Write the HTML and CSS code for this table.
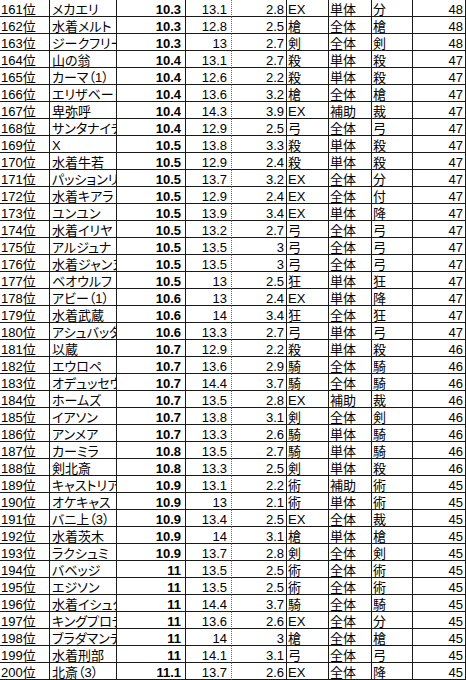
FILE: index.html
```html
<!DOCTYPE html>
<html lang="ja">
<head>
<meta charset="utf-8">
<link rel="stylesheet" href="styles.css">
</head>
<body>
<div class="sheet">
<div class="row"><span class="c rk">161位</span><span class="c nm">メカエリ</span><span class="c v b">10.3</span><span class="c v d">13.1</span><span class="c v">2.8</span><span class="c t">EX</span><span class="c t">単体</span><span class="c t">分</span><span class="c v">48</span></div>
<div class="row"><span class="c rk">162位</span><span class="c nm">水着メルト</span><span class="c v b">10.3</span><span class="c v d">12.8</span><span class="c v">2.5</span><span class="c t">槍</span><span class="c t">全体</span><span class="c t">槍</span><span class="c v">48</span></div>
<div class="row"><span class="c rk">163位</span><span class="c nm">ジークフリート</span><span class="c v b">10.3</span><span class="c v d">13</span><span class="c v">2.7</span><span class="c t">剣</span><span class="c t">全体</span><span class="c t">剣</span><span class="c v">48</span></div>
<div class="row"><span class="c rk">164位</span><span class="c nm">山の翁</span><span class="c v b">10.4</span><span class="c v d">13.1</span><span class="c v">2.7</span><span class="c t">殺</span><span class="c t">単体</span><span class="c t">殺</span><span class="c v">47</span></div>
<div class="row"><span class="c rk">165位</span><span class="c nm">カーマ（1）</span><span class="c v b">10.4</span><span class="c v d">12.6</span><span class="c v">2.2</span><span class="c t">殺</span><span class="c t">単体</span><span class="c t">殺</span><span class="c v">47</span></div>
<div class="row"><span class="c rk">166位</span><span class="c nm">エリザベート</span><span class="c v b">10.4</span><span class="c v d">13.6</span><span class="c v">3.2</span><span class="c t">槍</span><span class="c t">全体</span><span class="c t">槍</span><span class="c v">47</span></div>
<div class="row"><span class="c rk">167位</span><span class="c nm">卑弥呼</span><span class="c v b">10.4</span><span class="c v d">14.3</span><span class="c v">3.9</span><span class="c t">EX</span><span class="c t">補助</span><span class="c t">裁</span><span class="c v">47</span></div>
<div class="row"><span class="c rk">168位</span><span class="c nm">サンタナイチンゲール</span><span class="c v b">10.4</span><span class="c v d">12.9</span><span class="c v">2.5</span><span class="c t">弓</span><span class="c t">全体</span><span class="c t">弓</span><span class="c v">47</span></div>
<div class="row"><span class="c rk">169位</span><span class="c nm">X</span><span class="c v b">10.5</span><span class="c v d">13.8</span><span class="c v">3.3</span><span class="c t">殺</span><span class="c t">単体</span><span class="c t">殺</span><span class="c v">47</span></div>
<div class="row"><span class="c rk">170位</span><span class="c nm">水着牛若</span><span class="c v b">10.5</span><span class="c v d">12.9</span><span class="c v">2.4</span><span class="c t">殺</span><span class="c t">単体</span><span class="c t">殺</span><span class="c v">47</span></div>
<div class="row"><span class="c rk">171位</span><span class="c nm">パッションリップ</span><span class="c v b">10.5</span><span class="c v d">13.7</span><span class="c v">3.2</span><span class="c t">EX</span><span class="c t">全体</span><span class="c t">分</span><span class="c v">47</span></div>
<div class="row"><span class="c rk">172位</span><span class="c nm">水着キアラ</span><span class="c v b">10.5</span><span class="c v d">12.9</span><span class="c v">2.4</span><span class="c t">EX</span><span class="c t">全体</span><span class="c t">付</span><span class="c v">47</span></div>
<div class="row"><span class="c rk">173位</span><span class="c nm">ユンユン</span><span class="c v b">10.5</span><span class="c v d">13.9</span><span class="c v">3.4</span><span class="c t">EX</span><span class="c t">単体</span><span class="c t">降</span><span class="c v">47</span></div>
<div class="row"><span class="c rk">174位</span><span class="c nm">水着イリヤ</span><span class="c v b">10.5</span><span class="c v d">13.2</span><span class="c v">2.7</span><span class="c t">弓</span><span class="c t">全体</span><span class="c t">弓</span><span class="c v">47</span></div>
<div class="row"><span class="c rk">175位</span><span class="c nm">アルジュナ</span><span class="c v b">10.5</span><span class="c v d">13.5</span><span class="c v">3</span><span class="c t">弓</span><span class="c t">全体</span><span class="c t">弓</span><span class="c v">47</span></div>
<div class="row"><span class="c rk">176位</span><span class="c nm">水着ジャンヌ</span><span class="c v b">10.5</span><span class="c v d">13.5</span><span class="c v">3</span><span class="c t">弓</span><span class="c t">全体</span><span class="c t">弓</span><span class="c v">47</span></div>
<div class="row"><span class="c rk">177位</span><span class="c nm">ベオウルフ</span><span class="c v b">10.5</span><span class="c v d">13</span><span class="c v">2.5</span><span class="c t">狂</span><span class="c t">単体</span><span class="c t">狂</span><span class="c v">47</span></div>
<div class="row"><span class="c rk">178位</span><span class="c nm">アビー（1）</span><span class="c v b">10.6</span><span class="c v d">13</span><span class="c v">2.4</span><span class="c t">EX</span><span class="c t">単体</span><span class="c t">降</span><span class="c v">47</span></div>
<div class="row"><span class="c rk">179位</span><span class="c nm">水着武蔵</span><span class="c v b">10.6</span><span class="c v d">14</span><span class="c v">3.4</span><span class="c t">狂</span><span class="c t">全体</span><span class="c t">狂</span><span class="c v">47</span></div>
<div class="row"><span class="c rk">180位</span><span class="c nm">アシュバッターマン</span><span class="c v b">10.6</span><span class="c v d">13.3</span><span class="c v">2.7</span><span class="c t">弓</span><span class="c t">単体</span><span class="c t">弓</span><span class="c v">47</span></div>
<div class="row"><span class="c rk">181位</span><span class="c nm">以蔵</span><span class="c v b">10.7</span><span class="c v d">12.9</span><span class="c v">2.2</span><span class="c t">殺</span><span class="c t">単体</span><span class="c t">殺</span><span class="c v">46</span></div>
<div class="row"><span class="c rk">182位</span><span class="c nm">エウロペ</span><span class="c v b">10.7</span><span class="c v d">13.6</span><span class="c v">2.9</span><span class="c t">騎</span><span class="c t">全体</span><span class="c t">騎</span><span class="c v">46</span></div>
<div class="row"><span class="c rk">183位</span><span class="c nm">オデュッセウス</span><span class="c v b">10.7</span><span class="c v d">14.4</span><span class="c v">3.7</span><span class="c t">騎</span><span class="c t">全体</span><span class="c t">騎</span><span class="c v">46</span></div>
<div class="row"><span class="c rk">184位</span><span class="c nm">ホームズ</span><span class="c v b">10.7</span><span class="c v d">13.5</span><span class="c v">2.8</span><span class="c t">EX</span><span class="c t">補助</span><span class="c t">裁</span><span class="c v">46</span></div>
<div class="row"><span class="c rk">185位</span><span class="c nm">イアソン</span><span class="c v b">10.7</span><span class="c v d">13.8</span><span class="c v">3.1</span><span class="c t">剣</span><span class="c t">全体</span><span class="c t">剣</span><span class="c v">46</span></div>
<div class="row"><span class="c rk">186位</span><span class="c nm">アンメア</span><span class="c v b">10.7</span><span class="c v d">13.3</span><span class="c v">2.6</span><span class="c t">騎</span><span class="c t">単体</span><span class="c t">騎</span><span class="c v">46</span></div>
<div class="row"><span class="c rk">187位</span><span class="c nm">カーミラ</span><span class="c v b">10.8</span><span class="c v d">13.5</span><span class="c v">2.7</span><span class="c t">騎</span><span class="c t">単体</span><span class="c t">騎</span><span class="c v">46</span></div>
<div class="row"><span class="c rk">188位</span><span class="c nm">剣北斎</span><span class="c v b">10.8</span><span class="c v d">13.3</span><span class="c v">2.5</span><span class="c t">剣</span><span class="c t">単体</span><span class="c t">殺</span><span class="c v">46</span></div>
<div class="row"><span class="c rk">189位</span><span class="c nm">キャストリア</span><span class="c v b">10.9</span><span class="c v d">13.1</span><span class="c v">2.2</span><span class="c t">術</span><span class="c t">補助</span><span class="c t">術</span><span class="c v">45</span></div>
<div class="row"><span class="c rk">190位</span><span class="c nm">オケキャス</span><span class="c v b">10.9</span><span class="c v d">13</span><span class="c v">2.1</span><span class="c t">術</span><span class="c t">単体</span><span class="c t">術</span><span class="c v">45</span></div>
<div class="row"><span class="c rk">191位</span><span class="c nm">バニ上（3）</span><span class="c v b">10.9</span><span class="c v d">13.4</span><span class="c v">2.5</span><span class="c t">EX</span><span class="c t">全体</span><span class="c t">裁</span><span class="c v">45</span></div>
<div class="row"><span class="c rk">192位</span><span class="c nm">水着茨木</span><span class="c v b">10.9</span><span class="c v d">14</span><span class="c v">3.1</span><span class="c t">槍</span><span class="c t">単体</span><span class="c t">槍</span><span class="c v">45</span></div>
<div class="row"><span class="c rk">193位</span><span class="c nm">ラクシュミ</span><span class="c v b">10.9</span><span class="c v d">13.7</span><span class="c v">2.8</span><span class="c t">剣</span><span class="c t">全体</span><span class="c t">剣</span><span class="c v">45</span></div>
<div class="row"><span class="c rk">194位</span><span class="c nm">バベッジ</span><span class="c v b">11</span><span class="c v d">13.5</span><span class="c v">2.5</span><span class="c t">術</span><span class="c t">全体</span><span class="c t">術</span><span class="c v">45</span></div>
<div class="row"><span class="c rk">195位</span><span class="c nm">エジソン</span><span class="c v b">11</span><span class="c v d">13.5</span><span class="c v">2.5</span><span class="c t">術</span><span class="c t">全体</span><span class="c t">術</span><span class="c v">45</span></div>
<div class="row"><span class="c rk">196位</span><span class="c nm">水着イシュタル</span><span class="c v b">11</span><span class="c v d">14.4</span><span class="c v">3.7</span><span class="c t">騎</span><span class="c t">全体</span><span class="c t">騎</span><span class="c v">45</span></div>
<div class="row"><span class="c rk">197位</span><span class="c nm">キングプロテア</span><span class="c v b">11</span><span class="c v d">13.6</span><span class="c v">2.6</span><span class="c t">EX</span><span class="c t">全体</span><span class="c t">分</span><span class="c v">45</span></div>
<div class="row"><span class="c rk">198位</span><span class="c nm">ブラダマンテ</span><span class="c v b">11</span><span class="c v d">14</span><span class="c v">3</span><span class="c t">槍</span><span class="c t">全体</span><span class="c t">槍</span><span class="c v">45</span></div>
<div class="row"><span class="c rk">199位</span><span class="c nm">水着刑部</span><span class="c v b">11</span><span class="c v d">14.1</span><span class="c v">3.1</span><span class="c t">弓</span><span class="c t">全体</span><span class="c t">弓</span><span class="c v">45</span></div>
<div class="row"><span class="c rk">200位</span><span class="c nm">北斎（3）</span><span class="c v b">11.1</span><span class="c v d">13.7</span><span class="c v">2.6</span><span class="c t">EX</span><span class="c t">全体</span><span class="c t">降</span><span class="c v">45</span></div>
</div>
</body>
</html>
```

FILE: styles.css
```css
html, body {
  margin: 0;
  padding: 0;
  background: #fff;
}

.sheet {
  width: 466px;
  font-family: "Liberation Sans", "Noto Sans CJK JP", sans-serif;
  font-size: 13px;
  color: #000;
}

.row {
  display: grid;
  grid-template-columns: 50px 67px 69px 46px 55px 42px 43px 41px 53px;
  height: 17px;
}

.c {
  box-sizing: border-box;
  height: 17px;
  border-right: 1px solid #1a1a1a;
  border-bottom: 1px solid #1a1a1a;
  line-height: 16px;
  padding-top: 2px;
  overflow: hidden;
  white-space: nowrap;
}

.rk {
  padding-left: 1px;
}

.nm {
  padding-left: 2px;
  font-feature-settings: "palt";
}

.v {
  text-align: right;
  padding-right: 2px;
}

.b {
  font-weight: bold;
  padding-right: 4px;
}

.d {
  border-right: 1px dotted #666;
  padding-right: 4px;
}

.t {
  padding-left: 1px;
}
```
